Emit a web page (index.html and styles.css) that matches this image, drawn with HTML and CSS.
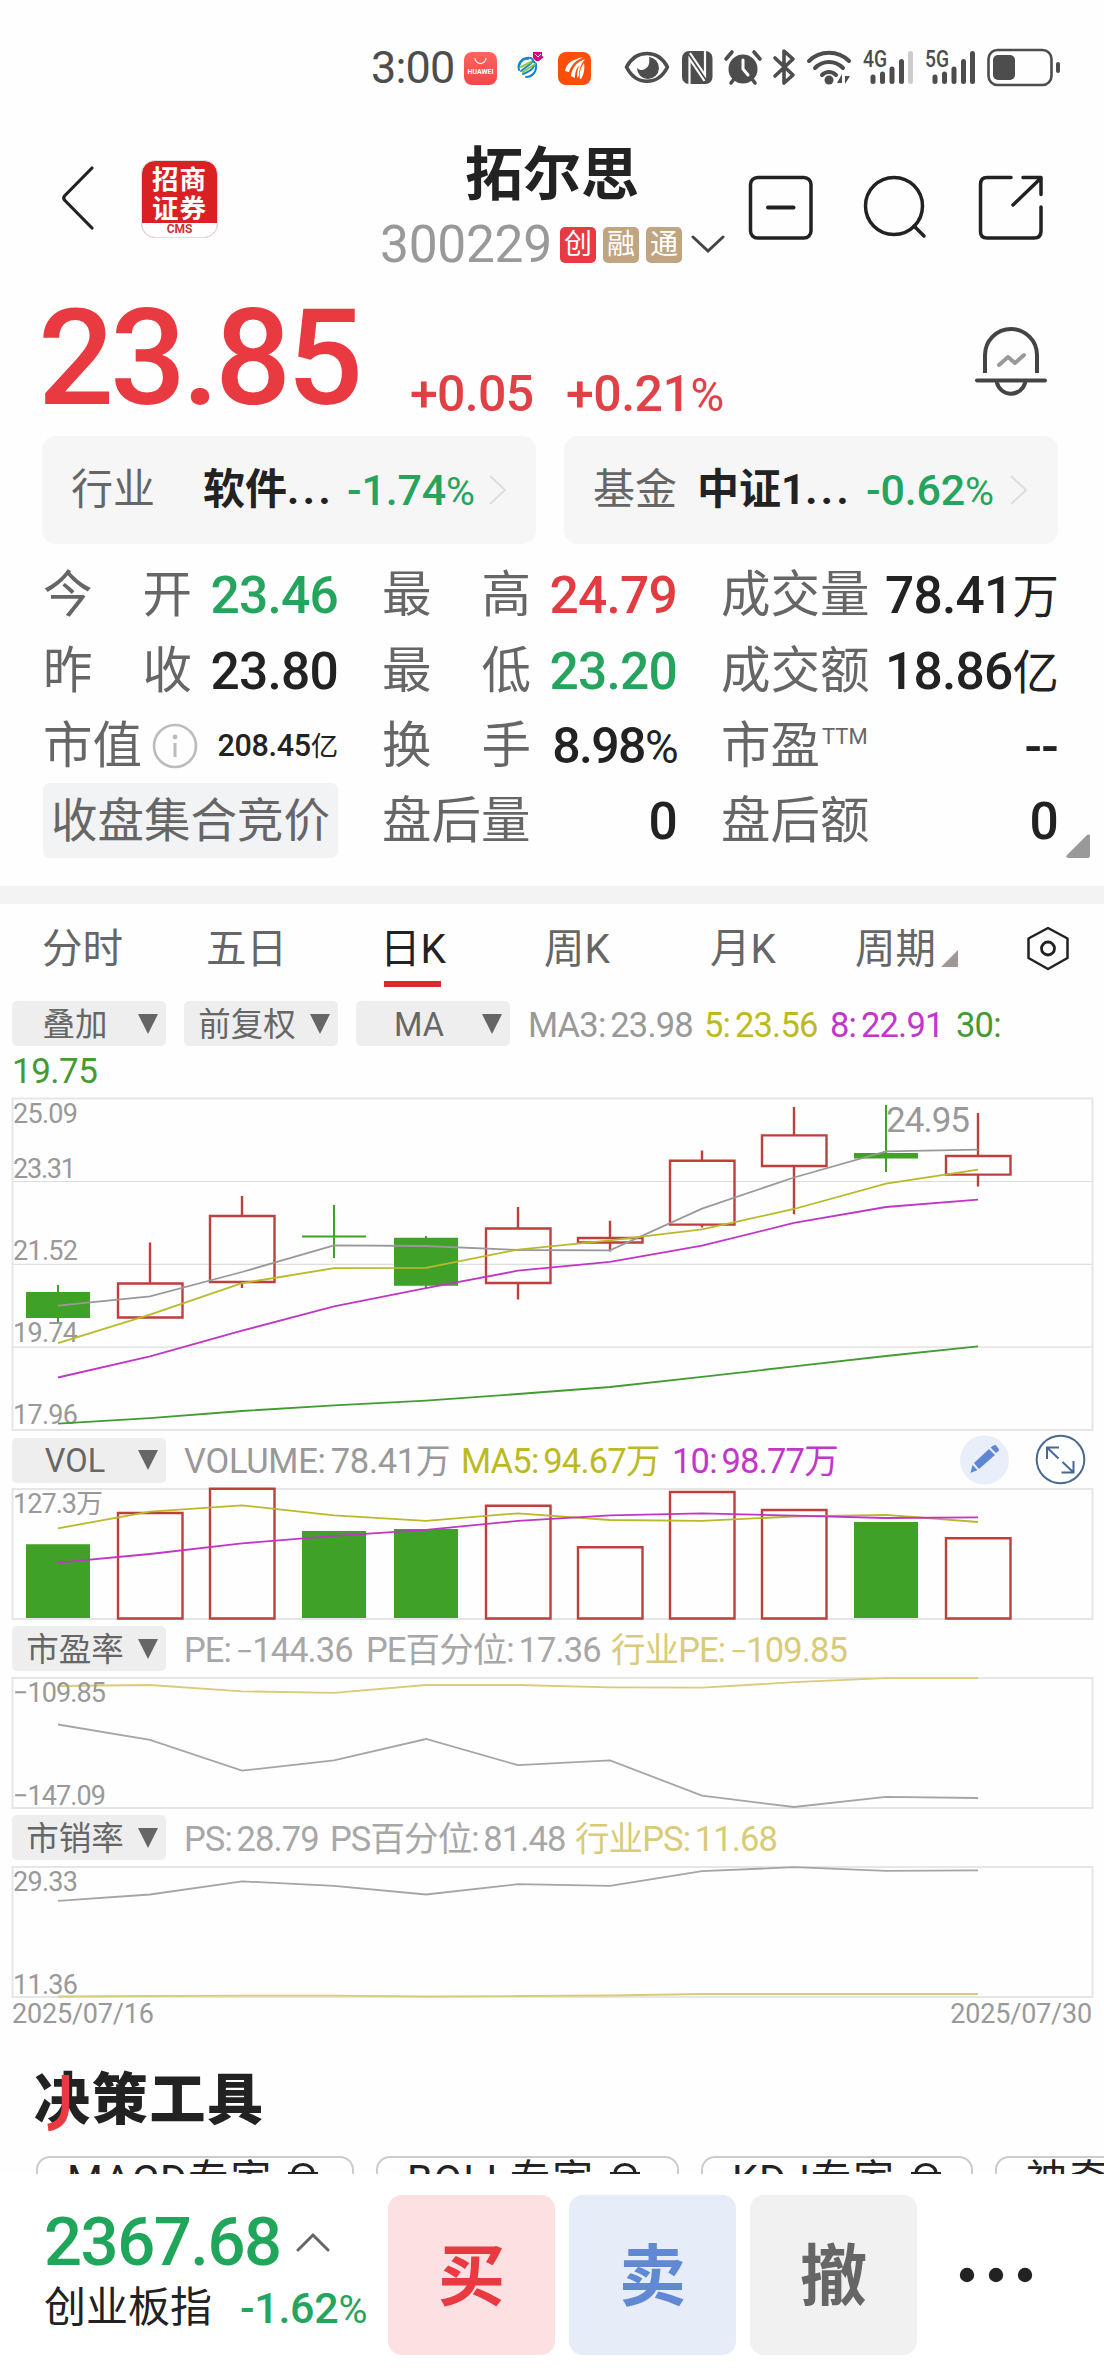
FILE: index.html
```html
<!DOCTYPE html>
<html lang="zh-CN">
<head>
<meta charset="utf-8">
<title>拓尔思 300229</title>
<link rel="stylesheet" href="styles.css">
</head>
<body>
<header class="status">
  <span class="clock">3:00</span>
  <svg class="st-icons" width="610" height="60" viewBox="455 40 610 60">
    <defs><linearGradient id="hw" x1="0" y1="0" x2="0" y2="1"><stop offset="0" stop-color="#ff655c"/><stop offset="1" stop-color="#f5464b"/></linearGradient></defs>
    <rect x="464" y="52" width="33" height="33" rx="8" fill="url(#hw)"/>
    <path d="M475 58a5.5 5.5 0 0 0 11 0" fill="none" stroke="#fff" stroke-width="1.2"/>
    <text x="467.500" y="74" class="hw-text" textLength="26" lengthAdjust="spacingAndGlyphs">HUAWEI</text>
    <g fill="none" stroke-width="2" stroke-linecap="round">
      <path d="M519 70c-2-8 4-13 12-12M521 71l8-6c3-2 5-5 3-6M523 74c3-1 9-4 11-8" stroke="#1685c6"/>
      <path d="M519 66c1-5 6-8 9-7M526 77c6 0 11-5 10-13l-3-3" stroke="#1685c6"/>
      <path d="M521 67l10-5M523 72l12-8" stroke="#8fc743"/>
    </g>
    <path d="M533 52h9v4l2 1-5 4h-3l-3-3z" fill="#d6087f"/>
    <path d="M535 54l3 3 3-3" fill="none" stroke="#fff" stroke-width="1"/>
    <rect x="558" y="52" width="33" height="33" rx="8" fill="#fb4e0a"/>
    <path d="M565 71c1-8 8-12 19-14-8 3-13 8-15 15zM571 76c1-9 6-14 14-17-4 5-6 10-6 17l-2 2c0-7 1-10 3-13-4 3-5 8-5 13zM580 79c-1-7 1-12 4-16 1 6 0 11-3 16z" fill="#fff"/>
    <path d="M626.500 67C636 49 658 49 667.500 67 658 86 636 86 626.500 67z" fill="none" stroke="#4d4d4d" stroke-width="3.600" stroke-linejoin="round"/>
    <path d="M649 57a11 11 0 1 1-12 11c2 2 5 3 8 1 4-2 5-7 4-12z" fill="#4d4d4d"/>
    <rect x="682" y="51" width="30.500" height="33" rx="7" fill="#4d4d4d"/>
    <path d="M689.500 84V59l15 22M705 51v24L690 53" fill="none" stroke="#fefefe" stroke-width="2.200"/>
    <circle cx="743" cy="69" r="14.500" fill="#4d4d4d"/>
    <path d="M726 59l6-7M760 59l-6-7M731 83l3-4M755 83l-3-4" stroke="#4d4d4d" stroke-width="3.600" stroke-linecap="round"/>
    <path d="M743 60v9l5 6" fill="none" stroke="#fff" stroke-width="3" stroke-linecap="round"/>
    <path d="M775 58l18 17-9 8V51l9 8-18 17" fill="none" stroke="#4d4d4d" stroke-width="3.600" stroke-linejoin="round" stroke-linecap="round"/>
    <g fill="none" stroke="#4d4d4d" stroke-width="4" stroke-linecap="round"><path d="M809 61c11-11 29-11 40 0M815 68c8-8 20-8 28 0M822 75c4-4 10-4 14 0"/></g>
    <circle cx="829" cy="80" r="4.500" fill="#4d4d4d"/>
    <path d="M842 74v9h-5zM845 76h5l-5 8z" fill="#4d4d4d"/>
    <text x="863" y="67" class="net" textLength="24" lengthAdjust="spacingAndGlyphs">4G</text>
    <text x="925" y="67" class="net" textLength="24" lengthAdjust="spacingAndGlyphs">5G</text>
    <g stroke="#4d4d4d" stroke-width="5" stroke-linecap="round">
      <path d="M873 77v4.500M882.500 74v7.500M892 69v12.500M901.500 61.500v20M935 77v4.500M944.500 74v7.500M954 69v12.500M963.500 61.500v20M972.500 53.500v28"/>
      <path d="M910.500 53.500v28" stroke="#ccc"/>
    </g>
    <rect x="988.500" y="50" width="63" height="35" rx="9" fill="none" stroke="#4d4d4d" stroke-width="2.600"/>
    <rect x="993" y="55" width="22" height="25" rx="5" fill="#4d4d4d"/>
    <rect x="1056" y="62" width="4" height="11" rx="2" fill="#4d4d4d"/>
  </svg>
</header>

<nav class="nav">
  <svg class="back" width="40" height="70" viewBox="58 163 40 70"><path d="M92 168L64.500 196q-1.500 2 0 4L92 228" fill="none" stroke="#222" stroke-width="3.200" stroke-linecap="round"/></svg>
  <div class="logo"><span class="logo-cn">招商<br>证券</span><span class="logo-en">CMS</span></div>
  <div class="heading">
    <h1>拓尔思</h1>
    <div class="code-row">
      <span class="code">300229</span>
      <span class="badge red">创</span><span class="badge">融</span><span class="badge">通</span>
      <svg width="34" height="20" viewBox="0 0 34 20"><path d="M2 2l15 14L32 2" fill="none" stroke="#444" stroke-width="3" stroke-linecap="round"/></svg>
    </div>
  </div>
  <svg class="actions" width="300" height="70" viewBox="745 172 300 70">
    <g fill="none" stroke="#222" stroke-width="3.500" stroke-linecap="round" stroke-linejoin="round">
      <rect x="750.500" y="177.500" width="60.500" height="60.500" rx="7"/>
      <path d="M768 207.500h25.500" stroke-width="4"/>
      <circle cx="894" cy="206" r="28.500"/><path d="M914 226l10 10"/>
      <path d="M1011 177.500h-24q-6.500 0-6.500 7v47q0 6.500 6.500 6.500h47q7 0 7-7v-24M1023 177.500h18v17M1041 178l-28 27"/>
    </g>
  </svg>
</nav>

<section class="price-row">
  <span class="price">23.85</span>
  <span class="chg c1">+0.05</span>
  <span class="chg c2">+0.21<small>%</small></span>
  <svg class="bell" width="76" height="76" viewBox="973 325 76 76">
    <g fill="none" stroke="#444" stroke-width="4" stroke-linecap="round">
      <path d="M985 373v-18a26 26 0 0 1 52 0v18" stroke-linecap="butt"/>
      <path d="M977 380.500h68"/><path d="M997 383a14.500 14.500 0 0 0 28 0"/>
      <path d="M999 365l9-8 7 6 9-8" stroke="#999" stroke-linejoin="round"/>
    </g>
  </svg>
</section>

<section class="cards">
  <div class="card"><span class="card-k">行业</span><b class="n1">软件<s>...</s></b><span class="pct p1">-1.74<small>%</small></span><svg width="18" height="30" viewBox="0 0 18 30"><path d="M1 1l15 14L1 29" fill="none" stroke="#ddd" stroke-width="2"/></svg></div>
  <div class="card"><span class="card-k">基金</span><b class="n2">中证1<s>...</s></b><span class="pct p2">-0.62<small>%</small></span><svg width="18" height="30" viewBox="0 0 18 30"><path d="M1 1l15 14L1 29" fill="none" stroke="#ddd" stroke-width="2"/></svg></div>
</section>

<section class="quotes">
  <div class="q"><span class="k"><i>今</i><i>开</i></span><span class="v green">23.46</span></div>
  <div class="q"><span class="k"><i>最</i><i>高</i></span><span class="v red-t">24.79</span></div>
  <div class="q"><span class="k">成交量</span><span class="v">78.41<small class="unit">万</small></span></div>
  <div class="q"><span class="k"><i>昨</i><i>收</i></span><span class="v">23.80</span></div>
  <div class="q"><span class="k"><i>最</i><i>低</i></span><span class="v green">23.20</span></div>
  <div class="q"><span class="k">成交额</span><span class="v">18.86<small class="unit">亿</small></span></div>
  <div class="q"><span class="k cap">市值<svg width="48" height="48" viewBox="0 0 48 48"><circle cx="24" cy="24" r="21" fill="none" stroke="#bbb" stroke-width="2.600"/><circle cx="24" cy="15" r="2.400" fill="#bbb"/><path d="M24 21v14" stroke="#bbb" stroke-width="3"/></svg></span><span class="v small">208.45<small class="unit">亿</small></span></div>
  <div class="q"><span class="k"><i>换</i><i>手</i></span><span class="v pc">8.98<small>%</small></span></div>
  <div class="q"><span class="k ttm">市盈<sup>TTM</sup></span><span class="v">--</span></div>
  <div class="q auction">收盘集合竞价</div>
  <div class="q"><span class="k">盘后量</span><span class="v">0</span></div>
  <div class="q"><span class="k">盘后额</span><span class="v">0</span><svg class="more" width="24" height="24" viewBox="0 0 24 24"><path d="M24 1v21q0 2-2 2H2q-3-1-1-3L21 1q2-1 3 0z" fill="#999"/></svg></div>
</section>
<div class="divider"></div>

<section class="tabs">
  <span>分时</span><span>五日</span><span class="on">日K</span><span>周K</span><span>月K</span><span class="period">周期<svg width="17" height="17" viewBox="0 0 17 17"><path d="M17 0v17H0z" fill="#a19797"/></svg></span>
  <svg class="gear" width="44" height="46" viewBox="1024 925 44 46"><path d="M1046 928l19.500 10.500v19.500L1046 969l-19.500-11v-19.500z" fill="none" stroke="#222" stroke-width="2.500" stroke-linejoin="round"/><circle cx="1046" cy="948.500" r="6.500" fill="none" stroke="#222" stroke-width="2.800"/></svg>
</section>

<section class="bar main-bar">
  <span class="chip"><em>叠加</em><u></u></span><span class="chip"><em>前复权</em><u></u></span><span class="chip"><em>MA</em><u></u></span>
  <span class="lg g3">MA3: 23.98</span><span class="lg y5">5: 23.56</span><span class="lg m8">8: 22.91</span><span class="lg gr">30:</span>
</section>
<div class="wrap-line">19.75</div>

<svg class="chart k-chart" width="1104" height="336" viewBox="0 1097 1104 336">
  <g fill="none" stroke="#ddd" stroke-width="1.200"><path d="M12 1181.500h1080M12 1264.300h1080M12 1347.200h1080"/><rect x="12.500" y="1098.500" width="1080" height="331.500" stroke="#e6e6e6" stroke-width="2"/></g>
  <g stroke="#3fa127" stroke-width="2" fill="#3fa127">
    <path d="M58 1285v38M334 1205v53M302 1236.400h64M426 1236v52M886 1105v67"/>
    <path d="M26 1292h64v26H26zM394 1237.700h64v48h-64zM854 1153h64v5.600h-64z" stroke="none"/>
  </g>
  <g stroke="#bf3f3d" stroke-width="2.400" fill="none">
    <path d="M118 1283.500h64.500v34H118zM150 1242.500v41"/>
    <path d="M210 1216h64.500v66H210zM242 1196v20M242 1282v6"/>
    <path d="M486 1228.500h64.500v54.500H486zM518 1207v21.500M518 1283v16.500"/>
    <path d="M578 1238h64.500v4.500H578zM610 1220.700v17M610 1242.500v9"/>
    <path d="M670 1160.700h64.500v63.900H670zM702 1150.400v10.300M702 1224.600v3"/>
    <path d="M762 1135.400h64.500v30.600H762zM794 1107v28.400M794 1166v48.300"/>
    <path d="M946 1156h64.500v18.600H946zM978 1113v43M978 1174.600v11.800"/>
  </g>
  <g class="axis"><text x="13" y="1123" textLength="65">25.09</text><text x="13" y="1177.500" textLength="63">23.31</text><text x="13" y="1260" textLength="65">21.52</text><text x="13" y="1342" textLength="65">19.74</text><text x="13" y="1424" textLength="65">17.96</text><text x="886" y="1132" class="peak" textLength="84">24.95</text></g>
  <g fill="none" stroke-width="1.800">
    <path stroke="#999" d="M58 1305.700L150 1296.400L242 1272L334 1245.400L426 1246L518 1250L610 1250.400L702 1208.600L794 1177.500L886 1151.400L978 1149.600"/>
    <path stroke="#b9b92a" d="M58 1343.200L150 1314.600L242 1283.200L334 1268.200L426 1267.900L518 1249.600L610 1240.400L702 1229.300L794 1209L886 1183.600L978 1169.600"/>
    <path stroke="#c136c4" d="M58 1377.500L150 1356.400L242 1330.700L334 1306.400L426 1288.200L518 1270.700L610 1261.800L702 1245.700L794 1222.900L886 1207L978 1199.600"/>
    <path stroke="#449a33" d="M58 1423.600L150 1418.200L242 1411L334 1405.400L426 1400.700L518 1394L610 1387L702 1376.800L794 1366.400L886 1356L978 1346.400"/>
  </g>
</svg>

<section class="bar vol-bar">
  <span class="chip"><em>VOL</em><u></u></span>
  <span class="lg v1">VOLUME: 78.41万</span><span class="lg v2">MA5: 94.67万</span><span class="lg v3">10: 98.77万</span>
  <svg class="tools" width="130" height="54" viewBox="958 1433 130 54">
    <circle cx="984.500" cy="1460" r="24.500" fill="#e9effa"/>
    <path d="M970.500 1473l2-8 5 5zM974 1463l15-14 6 6-16 14zM990.500 1447.500l3-2q2-1 3 .5l2 2.500q1 1.500 0 2.500l-2.500 2z" fill="#5f86d3"/>
    <g fill="none" stroke="#49698f" stroke-width="2"><circle cx="1060.500" cy="1459.500" r="23.800"/><path d="M1047 1459v-11.500h12M1047 1447.500l11.500 11M1062.500 1462l11 10.500M1073.500 1461v11.500h-12"/></g>
  </svg>
</section>
<svg class="chart" width="1104" height="134" viewBox="0 1487 1104 134">
  <rect x="12.500" y="1489" width="1080" height="130" fill="none" stroke="#e6e6e6" stroke-width="2"/>
  <path d="M26 1544.200h64V1618H26zM302 1531h64v87h-64zM394 1529h64v89h-64zM854 1522h64v96h-64z" fill="#3fa127"/>
  <g class="axis"><text x="13" y="1513" textLength="90">127.3万</text></g>
  <g fill="none" stroke="#bf3f3d" stroke-width="2.400"><path d="M118 1513h64.500v105.500H118zM210 1488.800h64.500v129.700H210zM486 1505.800h64.500v112.700H486zM578 1547.300h64.500v71.200H578zM670 1492h64.500v126.500H670zM762 1510h64.500v108.500H762zM946 1538.200h64.500v80.300H946z"/></g>
  <g fill="none" stroke-width="1.800">
    <path stroke="#b9b92a" d="M58 1528.300L150 1511.700L242 1505.400L334 1515.300L426 1520.800L518 1513.300L610 1520L702 1520.800L794 1516.500L886 1514.900L978 1522"/>
    <path stroke="#c136c4" d="M58 1562.700L150 1554L242 1543.400L334 1535.900L426 1529.900L518 1520.800L610 1515.300L702 1513.300L794 1515.700L886 1518L978 1517.300"/>
  </g>
</svg>

<section class="bar">
  <span class="chip"><em>市盈率</em><u></u></span>
  <span class="lg e1">PE: <small>−</small>144.36</span><span class="lg e2">PE百分位: 17.36</span><span class="lg e3">行业PE: <small>−</small>109.85</span>
</section>
<svg class="chart" width="1104" height="134" viewBox="0 1676 1104 134">
  <rect x="12.500" y="1678" width="1080" height="130" fill="none" stroke="#e6e6e6" stroke-width="2"/>
  <g fill="none" stroke-width="1.800">
    <path stroke="#a5a5a5" d="M58 1724.500L150 1739.900L242 1770.700L334 1760.400L426 1739L518 1765.200L610 1760.400L702 1795.600L794 1807L886 1796.800L978 1798"/>
    <path stroke="#d9cb78" d="M58 1686L150 1685L242 1691.300L334 1692.800L426 1685L518 1685L610 1687.300L702 1687.700L794 1682.200L886 1678.200L978 1678.200"/>
  </g>
  <g class="axis"><text x="13" y="1702" textLength="93">−109.85</text><text x="13" y="1805" textLength="93">−147.09</text></g>
</svg>

<section class="bar">
  <span class="chip"><em>市销率</em><u></u></span>
  <span class="lg s1">PS: 28.79</span><span class="lg s2">PS百分位: 81.48</span><span class="lg s3">行业PS: 11.68</span>
</section>
<svg class="chart" width="1104" height="134" viewBox="0 1865 1104 134">
  <rect x="12.500" y="1867" width="1080" height="130" fill="none" stroke="#e6e6e6" stroke-width="2"/>
  <g fill="none" stroke-width="1.800">
    <path stroke="#a5a5a5" d="M58 1900.800L150 1894.500L242 1881.400L334 1885.800L426 1894.500L518 1884.200L610 1885.800L702 1871.200L794 1867.200L886 1870.800L978 1870.400"/>
    <path stroke="#d9cb78" d="M58 1996.500L150 1996L242 1995.700L334 1995.700L426 1996.500L518 1996L610 1995.500L702 1994L978 1994"/>
  </g>
  <g class="axis"><text x="13" y="1891" textLength="65">29.33</text><text x="13" y="1994" textLength="65">11.36</text></g>
</svg>
<div class="dates"><span>2025/07/16</span><span>2025/07/30</span></div>

<section class="tools-sec">
  <h2>决策工具<svg width="24" height="58" viewBox="0 0 24 58"><path d="M18.500 1v30q0 20-17.500 22.500" fill="none" stroke="#e83a40" stroke-width="7.500"/></svg></h2>
  <div class="pills">
    <span class="pill w1"><em>MACD专家</em><svg width="30" height="38" viewBox="0 0 30 38"><path d="M5 10a10 8.500 0 0 1 20 0M1 10.500h28v22H1z" fill="none" stroke="#222" stroke-width="3"/></svg></span>
    <span class="pill w2"><em>BOLL专家</em><svg width="30" height="38" viewBox="0 0 30 38"><path d="M5 10a10 8.500 0 0 1 20 0M1 10.500h28v22H1z" fill="none" stroke="#222" stroke-width="3"/></svg></span>
    <span class="pill w3"><em>KDJ专家</em><svg width="30" height="38" viewBox="0 0 30 38"><path d="M5 10a10 8.500 0 0 1 20 0M1 10.500h28v22H1z" fill="none" stroke="#222" stroke-width="3"/></svg></span>
    <span class="pill w4"><em>神奇</em></span>
  </div>
</section>

<footer class="foot">
  <div class="index">
    <div class="idx-top"><span class="idx">2367.68</span><svg width="34" height="20" viewBox="0 0 34 20"><path d="M2 18L17 3l15 15" fill="none" stroke="#666" stroke-width="3" stroke-linecap="round"/></svg></div>
    <div class="idx-bot"><span>创业板指</span><span class="idx-pct">-1.62<small>%</small></span></div>
  </div>
  <div class="btn buy">买</div><div class="btn sell">卖</div><div class="btn cancel">撤</div>
  <svg class="dots" width="76" height="20" viewBox="0 0 76 20"><circle cx="9" cy="10" r="7.200" fill="#222"/><circle cx="38" cy="10" r="7.200" fill="#222"/><circle cx="67" cy="10" r="7.200" fill="#222"/></svg>
</footer>
</body>
</html>
```
FILE: styles.css
```css
* { box-sizing: border-box; }
body {
  margin: 0;
  width: 1104px;
  height: 2376px;
  overflow: hidden;
  background: #fefefe;
  color: #222;
  font-family: Roboto, "Noto Sans CJK SC", sans-serif;
  line-height: 1;
  white-space: nowrap;
}
svg { display: block; flex: none; }
i, em { font-style: normal; }
u, s { text-decoration: none; }
s { letter-spacing: 3.5px; }
small { font-size: .92em; line-height: 1; font-weight: 400; }

.status { display: flex; height: 130px; padding: 40px 39px 0 371px; color: #4d4d4d; }
.clock { width: 84px; font-size: 45px; line-height: 56px; letter-spacing: -0.8px; }
.hw-text { font-size: 8px; font-weight: 700; fill: #fff; }
.net { font-size: 23px; font-weight: 500; fill: #4d4d4d; }

.nav { display: flex; height: 160px; padding-left: 58px; }
.back { margin-top: 33px; }
.logo {
  width: 77px; height: 78px; margin: 30px 0 0 43px;
  display: flex; flex-direction: column; align-items: center;
  background: #d92123; border-radius: 14px; overflow: hidden; border: 1px solid #e3dede;
  color: #fff;
}
.logo-cn { font-size: 26.5px; line-height: 29px; height: 63px; padding-top: 4px; font-weight: 700; letter-spacing: 1px; }
.logo-en { width: 77px; height: 14px; background: #fff; color: #c33; font-size: 12px; line-height: 13px; font-weight: 700; text-align: center; }
.heading { width: 349px; margin-left: 163px; }
h1 { margin: 12px 0 0 84px; height: 66px; font-size: 58px; line-height: 66px; font-weight: 700; }
.code-row { display: flex; align-items: center; height: 48px; margin-top: 13px; }
.code { width: 179px; color: #999; font-size: 51.5px; letter-spacing: -0.3px; text-indent: -1px; }
.badge { width: 36px; height: 36px; margin-right: 7px; border-radius: 5px; background: #bfa680; color: #fff; font-size: 28px; line-height: 35px; text-align: center; }
.badge.red { background: #e83a42; }
.code-row svg { margin-left: 2px; }
.actions { margin: 42px 0 0 15px; }

.price-row { display: flex; height: 146px; padding-left: 38px; }
.price { width: 372px; padding-top: 2px; font-size: 134px; line-height: 134px; font-weight: 500; color: #e83a40; letter-spacing: -4.2px; }
.chg { margin-top: 79px; font-size: 50px; font-weight: 500; color: #df4146; }
.c1 { width: 156px; letter-spacing: -0.7px; }
.c2 { width: 407px; letter-spacing: -0.5px; }
.bell { margin-top: 35px; }

.cards { display: flex; gap: 28px; padding-left: 42px; height: 108px; }
.card { display: flex; align-items: center; width: 494px; background: #f6f6f6; border-radius: 14px; padding: 0 0 0 29px; }
.card-k { color: #666; font-size: 42px; }
.card b { font-size: 42px; font-weight: 700; }
.n1 { margin-left: 48px; width: 144px; }
.n2 { margin-left: 20px; width: 169px; }
.pct { font-size: 43px; font-weight: 500; color: #24a45d; letter-spacing: -.2px; }
.p1 { width: 142px; }
.p2 { width: 144px; }

.quotes {
  display: grid; grid-template-columns: 295px 295px 337px; grid-auto-rows: 75.2px; column-gap: 44px;
  padding: 13px 0 0 43px; height: 342px;
}
.q { display: flex; align-items: center; justify-content: space-between; position: relative; padding-top: 3px; }
.k { display: flex; justify-content: space-between; width: 149px; color: #666; font-size: 49.5px; }
.v { font-size: 51.5px; font-weight: 500; letter-spacing: -0.8px; }
.pc { font-size: 50px; letter-spacing: -1.6px; }
.unit { font-size: .9em; font-weight: 400; }
.green { color: #24a45d; }
.red-t { color: #e03c42; }
.cap { align-items: center; width: 156px; }
.small { font-size: 30.5px; letter-spacing: -.3px; }
.ttm { justify-content: flex-start; }
sup { font-size: 22px; margin: 0 0 0 2px; line-height: 30px; font-weight: 400; }
.auction { justify-content: center; background: #f2f3f5; border-radius: 7px; color: #666; font-size: 46.500px; }
.more { position: absolute; right: -32px; bottom: 0; }
.divider { height: 18px; background: #f2f3f5; }

.tabs { display: flex; height: 97px; padding: 25px 0 0 42px; color: #666; font-size: 40.500px; line-height: 41px; }
.tabs span { width: 164px; height: 58px; }
.tabs .on { width: 57px; margin: 0 103px 0 14px; color: #222; border-bottom: 6px solid #d92c2e; text-indent: -4px; }
.tabs span:nth-child(4) { width: 166px; }
.tabs span:nth-child(5) { width: 145px; }
.tabs .period { display: flex; width: 171px; }
.period svg { margin: 21px 0 0 5px; }
.gear { margin-top: -4px; }

.bar { display: flex; align-items: center; height: 55px; padding-left: 12px; }
.main-bar { height: 45px; }
.vol-bar { height: 54px; }
.chip { display: flex; align-items: center; width: 154px; height: 45px; margin-right: 18px; border-radius: 5px; background: #eee; color: #666; padding-right: 8px; }
.chip em { width: 126px; padding-top: 3px; text-align: center; font-size: 32.500px; }
.chip u { border: 10px solid transparent; border-top: 20px solid #666; border-bottom: 0; }
.lg { padding-top: 3px; font-size: 34.500px; color: #999; word-spacing: -3px; letter-spacing: -0.8px; }
.lg small { font-size: .88em; }
.g3 { width: 176px; }
.y5, .v2 { color: #bcba22; }
.y5 { width: 126px; }
.m8, .v3 { color: #c136cb; }
.m8 { width: 126px; }
.gr, .wrap-line { color: #449a33; }
.wrap-line { height: 51px; padding: 8px 0 0 12px; font-size: 35px; letter-spacing: -0.5px; }
.v1 { width: 277px; letter-spacing: -0.3px; }
.v2 { width: 211px; }
.v3 { width: 286px; }
.e1, .e2, .s1, .s2 { color: #a7a7a7; letter-spacing: -0.9px; }
.e3, .s3 { color: #d9cb78; letter-spacing: -0.9px; }
.e1 { width: 182px; }
.e2 { width: 245px; }
.s1 { width: 146px; }
.s2 { width: 245px; }
.axis { font-size: 27px; fill: #999; }
.peak { font-size: 35px; }
.dates { display: flex; justify-content: space-between; height: 40px; padding: 2px 12px 0 12px; color: #999; font-size: 27px; letter-spacing: -0.2px; }

.tools-sec { height: 135px; padding: 28px 0 0 34px; overflow: hidden; }
h2 { position: relative; margin: 0; height: 89px; font-size: 56px; line-height: 67px; font-weight: 900; letter-spacing: 1.700px; }
h2 svg { position: absolute; left: 13px; top: 7px; }
.pills { display: flex; gap: 22px; margin-left: 2px; }
.pill { display: flex; flex: none; height: 66px; padding: 0 0 0 29px; border: 2px solid #ccc; border-radius: 14px; font-size: 41px; line-height: 44px; letter-spacing: 1.2px; }
.pill svg { margin: 5px 0 0 16px; }
.w1 { width: 318px; } .w2 { width: 303px; } .w3 { width: 272px; } .w4 { width: 300px; }

.foot { display: flex; height: 202px; padding: 21px 0 0 44px; background: #fff; }
.index { width: 344px; }
.idx-top { display: flex; align-items: center; height: 52px; margin-top: 21px; }
.idx { width: 252px; font-size: 67px; font-weight: 500; color: #1fa65b; letter-spacing: -1.5px; }
.idx-bot { display: flex; align-items: center; height: 50px; margin-top: 15px; font-size: 42px; }
.idx-bot span:first-child { width: 196px; }
.idx-pct { font-size: 43px; font-weight: 500; color: #24a45d; letter-spacing: -.3px; }
.btn { width: 167px; height: 160px; margin-right: 14px; border-radius: 14px; font-size: 67px; line-height: 165px; font-weight: 700; text-align: center; }
.buy { background: #fce0e2; color: #e83a40; }
.sell { background: #e6ecf8; color: #6088d3; }
.cancel { background: #f1f1f1; color: #666; }
.dots { margin: 70px 0 0 27px; }
```
